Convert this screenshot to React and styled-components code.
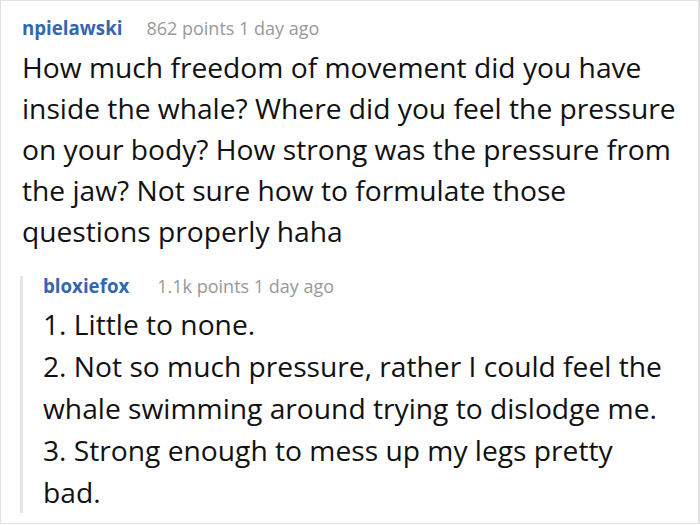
import React from "react";
import styled, { createGlobalStyle } from "styled-components";

const Global = createGlobalStyle`
  html, body { margin: 0; padding: 0; background: #ffffff; }
  body { font-family: "Open Sans", "Noto Sans", sans-serif; }
`;

const Card = styled.div`
  box-sizing: border-box;
  width: 700px;
  height: 524px;
  border: 1px solid #e2e2e2;
  border-right-width: 2px;
  background: #fff;
  padding: 15px 20px 0 21px;
  overflow: hidden;
`;

const Comment = styled.div`
  display: flex;
  flex-direction: column;
`;

const Nested = styled.div`
  margin: ${(p) => p.$top}px 14px 0 -2px;
  border-left: 3px solid #e6e6e6;
  padding-left: 20px;
  display: flex;
  flex-direction: column;
`;

const Header = styled.div`
  display: flex;
  align-items: baseline;
  line-height: ${(p) => p.$lh}px;
`;

const User = styled.span`
  font-weight: 700;
  font-size: 18.7px;
  color: #3565b0;
`;

const Meta = styled.span`
  margin-left: ${(p) => p.$gap}px;
  font-size: 18px;
  color: #999999;
`;

const Body = styled.p`
  margin: ${(p) => p.$mt}px 0 0 0;
  font-size: 28.2px;
  line-height: ${(p) => p.$lh}px;
  color: #111111;
`;

export default function App() {
  return (
    <>
      <Global />
      <Card>
        <Comment>
          <Header $lh={24}>
            <User>npielawski</User>
            <Meta $gap={24}>862 points 1 day ago</Meta>
          </Header>
          <Body $mt={7} $lh={41}>
            How much freedom of movement did you have inside the whale? Where
            did you feel the pressure on your body? How strong was the pressure
            from the jaw? Not sure how to formulate those questions properly
            haha
          </Body>
          <Nested $top={24}>
            <Header $lh={20}>
              <User>bloxiefox</User>
              <Meta $gap={28}>1.1k points 1 day ago</Meta>
            </Header>
            <Body $mt={7} $lh={42}>
              1. Little to none.
              <br />
              2. Not so much pressure, rather I could feel the whale swimming
              around trying to dislodge me.
              <br />
              3. Strong enough to mess up my legs pretty bad.
            </Body>
          </Nested>
        </Comment>
      </Card>
    </>
  );
}
